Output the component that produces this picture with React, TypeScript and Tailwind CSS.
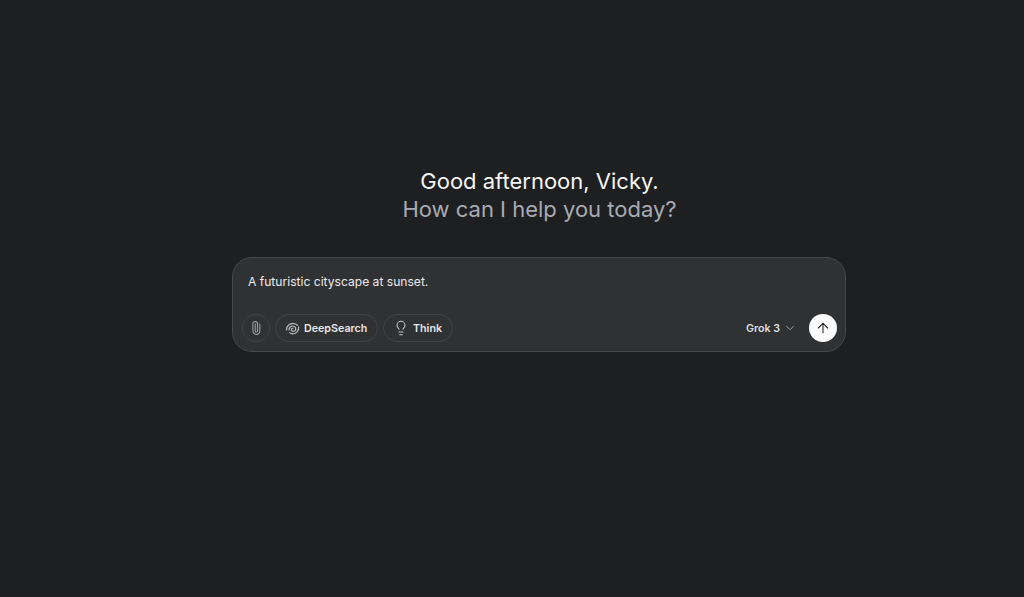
import { ArrowUp, ChevronDown, Lightbulb, Paperclip } from 'lucide-react';

function SwirlIcon() {
  return (
    <svg width="15" height="15" viewBox="0 0 16 16" fill="none" stroke="currentColor" strokeWidth="1.35" strokeLinecap="round">
      <path d="M1.6 9.6C1.4 5.4 5.2 2 9.6 2.8c1.5.3 2.7.9 3.6 1.8" />
      <path d="M14.5 6.2c.6 4.2-2.6 7.7-6.4 7.4-1.3-.1-2.3-.5-3.1-1.2" />
      <path d="M4.4 9.6C3.9 7 6.4 5 8.9 5.6c1.7.4 2.8 1.7 2.5 3.3-.3 1.5-1.8 2.4-3.2 2-1-.3-1.6-1.1-1.4-2 .2-.7.8-1.1 1.5-1" />
    </svg>
  );
}

export default function App() {
  return (
    <div className="h-[597px] w-full overflow-hidden bg-[#1e1f21] pl-[54px] pt-[167px] font-['Inter',sans-serif]">
      <div className="flex flex-col items-center">
        <h1 className="pl-px text-[22px] leading-[28px] font-normal text-[#f5f5f5]">Good afternoon, Vicky.</h1>
        <p className="pl-px text-[22px] leading-[28px] text-[#a8abb3]">How can I help you today?</p>

        <div className="mt-[34px] flex h-[95px] w-[614px] flex-col justify-between rounded-[20px] border border-[#47484a] bg-[#303133] pt-[15px] pr-[8px] pb-[9px] pl-[9px]">
          <p className="pl-[6px] text-[12.1px] leading-[18px] text-[#ebebeb]">A futuristic cityscape at sunset.</p>

          <div className="flex items-center justify-between">
            <div className="flex items-center gap-[5px]">
              <button className="flex h-[28px] w-[28px] items-center justify-center rounded-full border border-[#414245] text-[#a6a7aa]">
                <Paperclip size={14} strokeWidth={1.7} className="rotate-[-45deg]" />
              </button>
              <button className="flex h-[28px] w-[103px] items-center gap-[4px] rounded-full border border-[#414245] pl-[9px] text-[10.7px] font-semibold text-[#e6e6e6]">
                <span className="text-[#b5b6b8]"><SwirlIcon /></span>
                <span className="pt-[2px]">DeepSearch</span>
              </button>
              <button className="flex h-[28px] w-[70px] items-center gap-[4px] rounded-full border border-[#414245] pl-[9px] text-[10.7px] font-semibold text-[#e6e6e6]">
                <Lightbulb size={16} strokeWidth={1.6} className="text-[#c2c3c5]" />
                <span className="pt-[2px]">Think</span>
              </button>
            </div>

            <div className="flex items-center">
              <span className="pt-[2px] text-[10.7px] font-semibold text-[#dedede]">Grok 3</span>
              <ChevronDown size={14} strokeWidth={1.6} className="ml-[3px] text-[#a0a1a4]" />
              <button className="ml-[12px] flex h-[28px] w-[28px] items-center justify-center rounded-full bg-[#fbfbfb] text-[#26272a]">
                <ArrowUp size={16} strokeWidth={1.6} />
              </button>
            </div>
          </div>
        </div>
      </div>
    </div>
  );
}
